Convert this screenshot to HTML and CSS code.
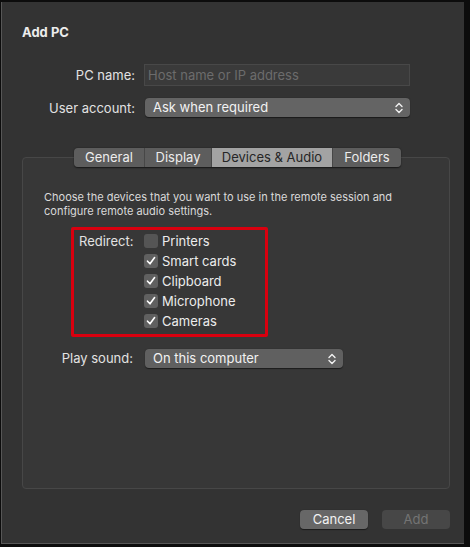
FILE: index.html
```html
<!DOCTYPE html>
<html>
<head>
<meta charset="utf-8">
<link rel="stylesheet" href="styles.css">
</head>
<body>
<div class="window">
  <div class="title">Add PC</div>
  <div class="form">
    <label class="lbl">PC name:</label>
    <div class="input">Host name or IP address</div>
    <label class="lbl">User account:</label>
    <div class="popup wide">
      <span>Ask when required</span>
      <svg class="chev" width="8" height="12" viewBox="0 0 8 12"><path d="M1 4.5 L4 1.5 L7 4.5 M1 7.5 L4 10.5 L7 7.5" fill="none" stroke="#f2f2f2" stroke-width="1.4" stroke-linecap="round" stroke-linejoin="round"/></svg>
    </div>
  </div>

  <div class="tabs">
    <div class="tab t1">General</div>
    <div class="tab t2">Display</div>
    <div class="tab t3 sel">Devices &amp; Audio</div>
    <div class="tab t4">Folders</div>
  </div>
  <div class="box">
    <p class="desc">Choose the devices that you want to use in the remote session and configure remote audio settings.</p>
    <div class="redbox">
      <div class="rlabel">Redirect:</div>
      <div class="checks">
        <div class="row"><span class="cb"></span>Printers</div>
        <div class="row"><span class="cb on"><svg width="14" height="14" viewBox="0 0 14 14"><path d="M3.5 7.2 L6 9.8 L10.6 3.6" fill="none" stroke="#fff" stroke-width="1.6" stroke-linecap="round" stroke-linejoin="round"/></svg></span>Smart cards</div>
        <div class="row"><span class="cb on"><svg width="14" height="14" viewBox="0 0 14 14"><path d="M3.5 7.2 L6 9.8 L10.6 3.6" fill="none" stroke="#fff" stroke-width="1.6" stroke-linecap="round" stroke-linejoin="round"/></svg></span>Clipboard</div>
        <div class="row"><span class="cb on"><svg width="14" height="14" viewBox="0 0 14 14"><path d="M3.5 7.2 L6 9.8 L10.6 3.6" fill="none" stroke="#fff" stroke-width="1.6" stroke-linecap="round" stroke-linejoin="round"/></svg></span>Microphone</div>
        <div class="row"><span class="cb on"><svg width="14" height="14" viewBox="0 0 14 14"><path d="M3.5 7.2 L6 9.8 L10.6 3.6" fill="none" stroke="#fff" stroke-width="1.6" stroke-linecap="round" stroke-linejoin="round"/></svg></span>Cameras</div>
      </div>
    </div>
    <div class="sound">
      <label class="slbl">Play sound:</label>
      <div class="popup narrow">
        <span>On this computer</span>
        <svg class="chev" width="8" height="12" viewBox="0 0 8 12"><path d="M1 4.5 L4 1.5 L7 4.5 M1 7.5 L4 10.5 L7 7.5" fill="none" stroke="#f2f2f2" stroke-width="1.4" stroke-linecap="round" stroke-linejoin="round"/></svg>
      </div>
    </div>
  </div>
  <div class="buttons">
    <div class="btn cancel">Cancel</div>
    <div class="btn add">Add</div>
  </div>
</div>
</body>
</html>
```

FILE: styles.css
```css
html, body {
  margin: 0;
  padding: 0;
  background: #0c0c0c;
}
body {
  font-family: Inter, "Liberation Sans", sans-serif;
  font-size: 13px;
  color: #e4e4e4;
  width: 470px;
  height: 547px;
  overflow: hidden;
}
.window {
  margin: 2px 0 0 1px;
  width: 463px;
  height: 542px;
  box-sizing: border-box;
  background: #333333;
  border-left: 1px solid #575757;
  border-bottom: 1px solid #575757;
  padding: 0 0 0 20px;
  display: flex;
  flex-direction: column;
}
.title {
  margin-top: 22px;
  font-weight: 700;
  font-size: 13px;
  line-height: 16px;
  color: #ececec;
}
.form {
  margin-top: 24px;
  display: grid;
  grid-template-columns: 113px 266px;
  column-gap: 9px;
  row-gap: 12px;
  align-items: center;
}
.lbl {
  text-align: right;
  line-height: 16px;
  color: #e2e2e2;
}
.input {
  height: 22px;
  box-sizing: border-box;
  background: #3a3a3a;
  border: 1px solid #484848;
  padding-left: 3px;
  line-height: 20px;
  color: #6c6c6c;
}
.popup {
  height: 19px;
  box-sizing: border-box;
  background: #646464;
  border-radius: 4px;
  box-shadow: 0 0.5px 1px rgba(0,0,0,0.5);
  display: flex;
  align-items: center;
  justify-content: space-between;
  padding: 0 7px 0 8px;
  color: #f2f2f2;
  line-height: 19px;
}
.popup.wide { margin-left: 1px; width: 265px; }
.chev { display: block; }
.tabs {
  margin-top: 31px;
  align-self: flex-start;
  margin-left: 52px;
  display: flex;
  height: 19px;
  border-radius: 4px;
  overflow: hidden;
  box-shadow: 0 0.5px 1.5px rgba(0,0,0,0.6);
  position: relative;
  z-index: 1;
  margin-bottom: -10px;
}
.tab {
  background: #5d5d5d;
  color: #ececec;
  line-height: 19px;
  text-align: center;
  border-right: 1px solid #474747;
  box-sizing: border-box;
}
.tab:last-child { border-right: 0; }
.t1 { width: 71px; }
.t2 { width: 67px; }
.t3 { width: 121px; }
.t4 { width: 68px; }
.tab.sel {
  background: #a3a3a3;
  color: #262626;
}
.box {
  width: 428px;
  height: 332px;
  box-sizing: border-box;
  border: 1px solid #474747;
  border-radius: 4px;
  background: #373737;
  padding: 32px 0 0 21px;
}
.desc {
  margin: 0;
  font-size: 11px;
  line-height: 14px;
  color: #dadada;
  width: 390px;
}
.redbox {
  margin: 9px 0 0 27px;
  width: 197px;
  height: 110px;
  box-sizing: border-box;
  border: 3px solid #d9000f;
  border-radius: 2px;
  padding: 1px 0 0 5px;
  display: flex;
}
.rlabel {
  width: 65px;
  line-height: 20px;
  color: #e2e2e2;
}
.checks {
  display: flex;
  flex-direction: column;
}
.row {
  height: 20px;
  display: flex;
  align-items: center;
  color: #ececec;
}
.cb {
  width: 14px;
  height: 14px;
  border-radius: 3px;
  background: #555555;
  margin-right: 4px;
  display: block;
}
.cb.on { background: #606060; }
.cb svg { display: block; }
.sound {
  margin-top: 12px;
  display: flex;
  align-items: center;
}
.slbl {
  width: 89px;
  text-align: right;
  color: #e2e2e2;
  line-height: 19px;
}
.popup.narrow {
  margin-left: 12px;
  width: 198px;
  background: #606060;
}
.buttons {
  margin-top: 21px;
  width: 428px;
  display: flex;
  justify-content: flex-end;
  gap: 14px;
}
.btn {
  width: 68px;
  height: 19px;
  border-radius: 4px;
  text-align: center;
  line-height: 19px;
}
.cancel {
  background: #676767;
  color: #f2f2f2;
  box-shadow: 0 0.5px 1px rgba(0,0,0,0.5);
}
.add {
  background: #474747;
  color: #747474;
}
```
